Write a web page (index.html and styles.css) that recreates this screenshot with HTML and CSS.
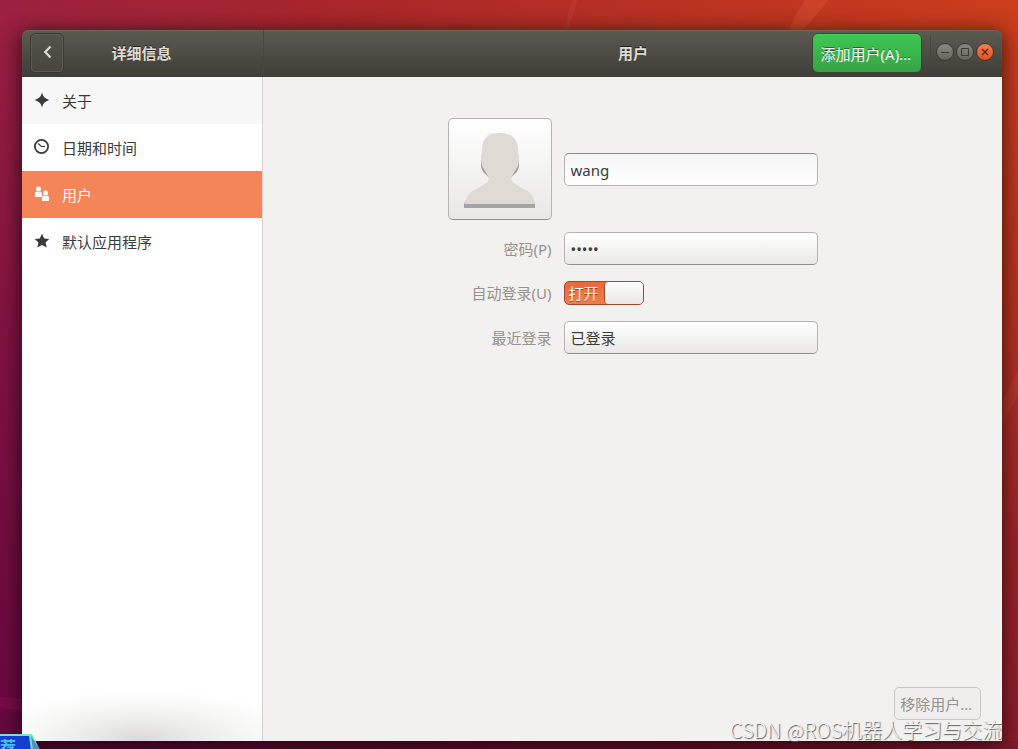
FILE: index.html
```html
<!DOCTYPE html>
<html lang="zh-CN">
<head>
<meta charset="utf-8">
<meta name="viewport" content="width=device-width, initial-scale=1">
<title>用户</title>
<link rel="stylesheet" href="styles.css">
</head>
<body class="desktop">
<svg class="wallpaper" viewBox="0 0 1018 749" preserveAspectRatio="none" aria-hidden="true">
  <path d="M0 0H102L72 30H0Z" fill="#c02840" opacity=".08"/>
  <path d="M572 0H578L568 30H563Z" fill="#fff" opacity=".04"/>
  <path d="M805 0H829L803 30H789L794 18Z" fill="#ff7a50" opacity=".18"/>
  <path d="M1018 370L1002 402V424L1018 396Z" fill="#ff8060" opacity=".1"/>
  <path d="M0 697L22 699V711L0 708Z" fill="#b01060" opacity=".25"/>
</svg>
<div class="window">
  <header class="titlebar">
    <div class="titlebar-side">
      <button class="back" type="button" aria-label="返回">
        <svg width="16" height="16" viewBox="0 0 16 16"><path d="M11.500 1.500L6.200 7L11.500 12.500" fill="none" stroke="#dfdbd2" stroke-width="2.200"/></svg>
      </button>
      <h2 class="title">详细信息</h2>
    </div>
    <div class="titlebar-main">
      <h1 class="title title-main">用户</h1>
      <div class="actions">
        <button class="add" type="button">添加用户(A)…</button>
        <div class="controls">
          <button class="control" type="button" aria-label="最小化"><svg width="16" height="16" viewBox="0 0 16 16"><path d="M4 8.500H12" stroke="#3b3a36"/></svg></button>
          <button class="control" type="button" aria-label="最大化"><svg width="16" height="16" viewBox="0 0 16 16"><path d="M4.500 4.500H11.500V11.500H4.500Z" fill="none" stroke="#3b3a36"/></svg></button>
          <button class="control control-close" type="button" aria-label="关闭"><svg width="16" height="16" viewBox="0 0 16 16"><path d="M5 5L11 11M11 5L5 11" stroke="#5a2310" stroke-width="1.300"/></svg></button>
        </div>
      </div>
    </div>
  </header>
  <div class="body">
    <nav class="sidebar">
      <a class="item item-hover" href="#about">
        <svg class="icon" viewBox="0 0 16 16"><path d="M8 .8C8.900 3.500 9.800 5 10.700 5.500C11.500 6.200 13 7 15.200 8C13 9 11.500 9.800 10.700 10.500C9.800 11 8.900 12.500 8 15.200C7.100 12.500 6.200 11 5.300 10.500C4.500 9.800 3 9 .8 8C3 7 4.500 6.200 5.300 5.500C6.200 5 7.100 3.500 8 .8Z"/></svg>
        <span>关于</span>
      </a>
      <a class="item" href="#datetime">
        <svg class="icon" viewBox="0 0 16 16"><circle cx="7.500" cy="7.500" r="6.600" fill="none" stroke="#3b3b3b" stroke-width="1.800"/><path d="M4 4.500L7.500 7.500H11" fill="none" stroke="#3b3b3b" stroke-width="1.200"/></svg>
        <span>日期和时间</span>
      </a>
      <a class="item item-selected" href="#users" aria-current="page">
        <svg class="icon" viewBox="0 0 16 16"><circle cx="4.500" cy="3" r="2.500"/><path d="M1 11V8Q1 5.500 3 5.500L4.500 6.500L6 5.500Q8 5.500 8 8V11Z"/><circle cx="11.500" cy="7" r="2.500"/><path d="M8 15V12Q8 9.500 10 9.500L11.500 10.500L13 9.500Q15 9.500 15 12V15Z"/></svg>
        <span>用户</span>
      </a>
      <a class="item" href="#apps">
        <svg class="icon" viewBox="0 0 16 16"><path d="M8 .8L10.200 5.600L15.200 6L11.600 9.400L12.700 14.600L8 12L3.300 14.600L4.400 9.400L.8 6L5.800 5.600Z"/></svg>
        <span>默认应用程序</span>
      </a>
    </nav>
    <main class="content">
      <form class="form">
        <button class="avatar" type="button" aria-label="更改头像">
          <svg width="96" height="96" viewBox="0 0 96 96">
            <path d="M12 87V83Q15 75 27 70Q36 66 37 61V57Q35 54 31 51L29 46V39H67V46L65 51Q61 54 59 57V61Q62 67 70 70Q82 75 83 83V87Z" fill="#a4a4a2"/>
            <path d="M13 83Q13 73 26 67Q37 61 37 58Q36 54 31 47Q29 43 29 36Q30 32 30 27Q31 18 36 15Q41 12 48 12Q55 12 60 15Q65 19 66 27Q66 32 67 36Q67 43 65 47Q60 54 59 58Q60 62 70 67Q83 73 83 83Z" fill="#dfdbd4"/>
            <path d="M40 16L35 15M41 16L37 13M42 15L40 12" stroke="#dfdbd4" fill="none"/>
          </svg>
        </button>
        <input class="entry" type="text" value="wang" aria-label="姓名">
        <label class="label" for="password">密码(P)</label>
        <button class="field" id="password" type="button">•••••</button>
        <label class="label" for="autologin">自动登录(U)</label>
        <div class="switch">
          <input class="switch-input" id="autologin" type="checkbox" role="switch" checked>
          <span class="switch-text">打开</span>
        </div>
        <label class="label" for="history">最近登录</label>
        <button class="field" id="history" type="button">已登录</button>
      </form>
      <button class="remove" type="button" disabled>移除用户…</button>
    </main>
  </div>
</div>
<div class="watermark">CSDN @ROS机器人学习与交流</div>
<div class="badge"><svg width="40" height="16" viewBox="0 0 40 16" aria-hidden="true"><path d="M0 0H32L40 16H0Z" fill="#70e8be"/><path d="M0 2H29L31 16H0Z" fill="#123fd0"/><path d="M31 2L40 16H33Z" fill="#5689c8"/></svg><span class="badge-text">荐</span></div>
</body>
</html>
```

FILE: styles.css
```css
* { box-sizing: border-box; }

.desktop {
  position: relative;
  display: flex;
  min-height: 100vh;
  margin: 0;
  padding: 30px 16px 8px 22px;
  overflow: hidden;
  font: 15px/22px "Noto Sans", "Noto Sans CJK SC", sans-serif;
  color: #3b3b3b;
  background:
    linear-gradient(to right, #4f0832, #6b1026 80%, #801a2e) bottom / 100% 8px no-repeat,
    linear-gradient(#9a2040, #7a1040 55%, #66083f) left / 22px 100% no-repeat,
    linear-gradient(#cb3d1b, #b5331f 40%, #9a2228 75%, #8c1c2c) right / 16px 100% no-repeat,
    linear-gradient(to right, #9a2040, #a92729 35%, #cb3d1b);
}

.desktop button,
.desktop input { font: inherit; color: inherit; }

.wallpaper {
  position: absolute;
  inset: 0;
  width: 100%;
  height: 100%;
}

.window {
  position: relative;
  display: flex;
  flex: 1;
  flex-direction: column;
  min-width: 0;
  border-radius: 7px 7px 0 0;
  box-shadow: 0 3px 20px 2px rgba(0, 0, 0, .6);
}

.titlebar {
  display: flex;
  height: 47px;
  border-radius: 7px 7px 0 0;
  color: #dfdbd2;
  background: linear-gradient(#5d5a51, #3e3d38);
  box-shadow: inset 0 1px #6a675d;
}

.titlebar-side {
  display: grid;
  flex: 0 0 242px;
  grid-template-columns: 34px 1fr 34px;
  align-items: center;
  padding: 0 10px 1px 8px;
  border-right: 1px solid #48463f;
}

.titlebar-main {
  display: grid;
  flex: 1;
  grid-template-columns: 1fr auto 1fr;
  align-items: center;
  padding: 0 8px 1px;
}

.title {
  margin: 0;
  font-size: 15px;
  font-weight: 700;
  line-height: 22px;
  text-align: center;
  text-shadow: 0 -1px rgba(0, 0, 0, .6);
}

.title-main { grid-column: 2; }

.back {
  display: grid;
  place-items: center;
  height: 40px;
  padding: 0;
  border: 1px solid #393832;
  border-radius: 5px;
  background: linear-gradient(#55534a, #46443e);
  box-shadow: inset 0 0 0 1px #5d5b53;
}

.actions {
  display: flex;
  align-items: center;
  justify-content: flex-end;
}

.desktop .add {
  height: 40px;
  padding: 2px 10px 0 8px;
  border: 1px solid #34492f;
  border-radius: 6px;
  color: #fff;
  white-space: nowrap;
  background: linear-gradient(#3ec94f, #39a248);
  box-shadow: inset 0 1px #45d257;
  text-shadow: 0 -1px rgba(0, 0, 0, .45);
}

.controls {
  display: flex;
  gap: 2px;
  margin-left: 8px;
  padding: 7px 0 9px 5px;
  border-left: 1px solid #46443e;
}

.control {
  display: grid;
  place-items: center;
  width: 18px;
  height: 18px;
  padding: 0;
  border: 1px solid #393832;
  border-radius: 50%;
  background: linear-gradient(#8b8982, #65635c);
}

.control-close { background: linear-gradient(#f58052, #e1501d); }

.body {
  display: flex;
  flex: 1;
}

.sidebar {
  flex: 0 0 241px;
  border-right: 1px solid #d5d3d0;
  background: radial-gradient(ellipse 160px 52px at 50% 100%, #dad9d7, #ebebea 35%, #f8f8f7 70%, #fff) #fff;
}

.item {
  display: flex;
  align-items: center;
  gap: 12px;
  height: 47px;
  padding: 0 12px;
  color: #3b3b3b;
  text-decoration: none;
  background: none;
}

.icon {
  width: 16px;
  height: 16px;
  margin-bottom: 2px;
  fill: currentColor;
}

.item-hover { background: #f7f7f7; }

.item-selected {
  color: #fff;
  background: #f38559;
}

.content {
  display: flex;
  flex: 1;
  flex-direction: column;
  align-items: center;
  justify-content: space-between;
  padding: 41px 21px 21px;
  background: #f2f1ef;
}

.form {
  display: grid;
  grid-template-columns: 104px 254px;
  align-items: center;
  gap: 12px;
}

.avatar {
  display: grid;
  place-items: center;
  height: 102px;
  padding: 0;
  border: 1px solid #b5b4b2;
  border-bottom-color: #929190;
  border-radius: 5px;
  background: linear-gradient(#fff, #e9e8e7);
}

.entry,
.field {
  width: 100%;
  height: 33px;
  padding: 1px 6px 0;
  border: 1px solid #b5b4b2;
  border-radius: 5px;
  text-align: left;
}

.entry {
  border-top-color: #8f8e8c;
  background: linear-gradient(#f5f5f5, #fff);
}

.field {
  border-bottom-color: #929190;
  background: linear-gradient(#fff, #e9e8e7);
}

.label {
  color: #96928e;
  text-align: right;
  white-space: nowrap;
}

.switch {
  display: grid;
  align-items: center;
  width: 80px;
  height: 32px;
}

.switch-input,
.switch-text { grid-area: 1 / 1; }

.switch-input {
  width: 80px;
  height: 24px;
  margin: 0;
  border: 1px solid #a1482b;
  border-radius: 5px;
  appearance: none;
  background: linear-gradient(#e9683a, #f07c4b);
}

.switch-input::before {
  display: block;
  width: 38px;
  height: 22px;
  margin-left: auto;
  border-left: 1px solid #a1482b;
  border-radius: 4px;
  background: linear-gradient(#fff, #e9e8e7);
  content: "";
}

.switch-text {
  padding-left: 5px;
  color: #fff;
  pointer-events: none;
  text-shadow: 0 1px rgba(120, 40, 10, .6);
}

.desktop .remove {
  align-self: flex-end;
  height: 33px;
  padding: 1px 8px 0 5px;
  border: 1px solid #c8c7c6;
  border-radius: 5px;
  color: #96928e;
  background: #efeeed;
}

.watermark {
  position: absolute;
  right: 16px;
  bottom: 5px;
  font: 300 20px/28px "Noto Sans CJK SC", sans-serif;
  color: #f4f4f4;
  text-shadow: 1px 1px 1px #555;
  white-space: nowrap;
}

.badge {
  position: absolute;
  bottom: 0;
  left: 0;
  height: 16px;
  overflow: hidden;
}

.badge-text {
  position: absolute;
  top: 3px;
  left: 0;
  font: bold 16px/20px "Noto Sans CJK SC", sans-serif;
  color: #50bdf2;
}
```
